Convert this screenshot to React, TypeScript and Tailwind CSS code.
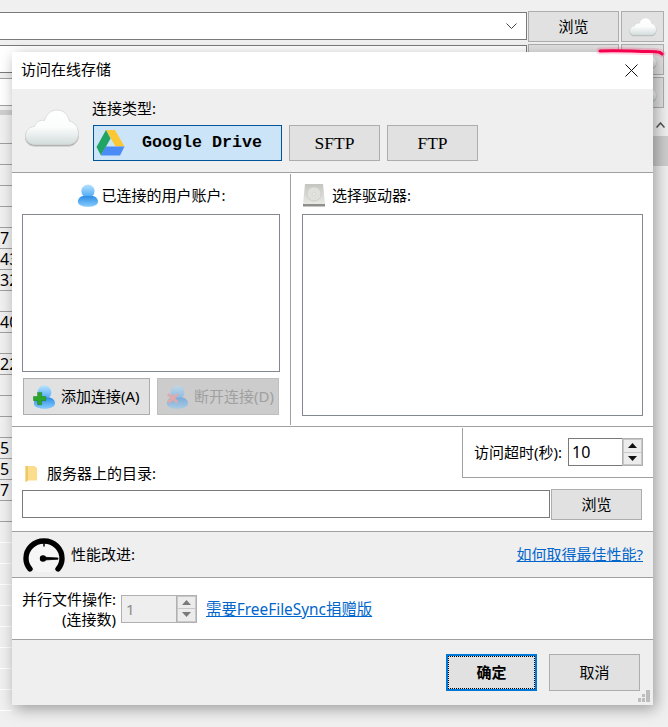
function CloudIcon({ className }: { className: string }) {
  const shape =
    "M11 36.5C5 36.5 1.5 32.5 1.5 27.5 1.5 22.5 5.5 18.5 10.5 18.5 12 13.5 16.5 11.5 20.5 12.5 22.5 6 27 2 33 2 39.5 2 44 6.5 45.5 13 51 14.5 54.5 19.5 54.5 25.5 54.5 32 50 36.5 44.5 36.5Z";
  return (
    <svg viewBox="0 0 56 40" className={className}>
      <defs>
        <linearGradient id="cloudFill" x1="0" y1="0" x2="0" y2="1">
          <stop offset="0" stopColor="#ffffff" />
          <stop offset="0.5" stopColor="#fbfcfc" />
          <stop offset="1" stopColor="#d3dcdc" />
        </linearGradient>
      </defs>
      <path d={shape} transform="translate(0 1.6)" fill="#a6aaa8" stroke="#bfc2c0" strokeWidth="1" />
      <path d={shape} fill="url(#cloudFill)" stroke="#d4d6d5" strokeWidth="0.8" />
    </svg>
  );
}

function DriveIcon() {
  return (
    <svg viewBox="0 0 29 28" className="w-[29px] h-[28px]">
      <path d="M10 1H19L28.5 17.5H19.5Z" fill="#fbc834" />
      <path d="M10 1L0.5 18L5 26.5L14.5 9.5Z" fill="#1fa463" />
      <path d="M9.5 17.5H28.5L24 26.5H5Z" fill="#4b8bf5" />
    </svg>
  );
}

function UserIcon({ className, badge }: { className: string; badge?: "add" | "remove" }) {
  return (
    <svg viewBox="0 0 24 26" className={className}>
      <defs>
        <linearGradient id="userHead" x1="0" y1="0" x2="0" y2="1">
          <stop offset="0" stopColor="#b4e2ff" />
          <stop offset="1" stopColor="#4aa6f4" />
        </linearGradient>
        <linearGradient id="userBody" x1="0" y1="0" x2="0" y2="1">
          <stop offset="0" stopColor="#2f8de6" />
          <stop offset="1" stopColor="#86ccfc" />
        </linearGradient>
      </defs>
      <circle cx="12.5" cy="8" r="7.5" fill="url(#userHead)" />
      <path d="M1 20C1 15.5 5 13.5 8 13.5H17C20 13.5 24 15.5 24 20 24 24 18 25.8 12.5 25.8 7 25.8 1 24 1 20Z" fill="url(#userBody)" />
      {badge === "add" && <path d="M5 8H9.5V12.5H14V17H9.5V21.5H5V17H0.5V12.5H5Z" fill="#2ba52b" stroke="#1f7d1f" strokeWidth="0.5" />}
      {badge === "remove" && <path d="M3 9L7.5 12 12 9 13.5 11.5 10 14.5 13.5 18 11.5 20 7.5 16.5 3.5 20 1 18 5 14.5 1 11.5Z" fill="#f08a8a" />}
    </svg>
  );
}

function DiskIcon() {
  return (
    <svg viewBox="0 0 24 24" className="w-[24px] h-[24px]">
      <defs>
        <linearGradient id="diskFill" x1="0" y1="0" x2="0" y2="1">
          <stop offset="0" stopColor="#c4c4c0" />
          <stop offset="1" stopColor="#e8e8e4" />
        </linearGradient>
      </defs>
      <path d="M3 1H21L23 21H1Z" fill="url(#diskFill)" />
      <circle cx="12" cy="11" r="7" fill="#e0e0dc" stroke="#d0d0cb" />
      <circle cx="12" cy="11" r="1.5" fill="#f6f6f4" stroke="#c4c4c0" strokeWidth="0.6" />
      <rect x="1" y="21" width="22" height="2.5" fill="#8f8f8c" />
    </svg>
  );
}

function FolderIcon() {
  return (
    <svg viewBox="0 0 13 18" className="w-[13px] h-[18px]">
      <path d="M0.5 1H9.5L12 3V15.5H3L0.5 17Z" fill="#fbdd8b" />
      <path d="M0.5 1H3V15.5L0.5 17Z" fill="#f0c868" />
    </svg>
  );
}

function GaugeIcon() {
  return (
    <svg viewBox="0 0 42 34" className="w-[42px] h-[34px]">
      <circle cx="21" cy="18" r="17" fill="#f6f6f6" />
      <path d="M7 31C4 27.5 3 24 3 20.5 3 10.5 11 3 21 3S39 10.5 39 20.5C39 24 38 27.5 35 31" fill="none" stroke="#000" strokeWidth="5.4" strokeLinecap="round" />
      <path d="M21 4V8.5" stroke="#000" strokeWidth="1.5" />
      <circle cx="20" cy="20.5" r="3.2" fill="#000" />
      <path d="M20 19.2L35 20V21.2L20 22Z" fill="#000" stroke="#000" strokeWidth="0.8" />
    </svg>
  );
}

function Spinner({ disabled }: { disabled?: boolean }) {
  const arrow = disabled ? "#7a7a7a" : "#111111";
  return (
    <div className="w-[21px] h-[28px] border border-[#b0b0b0] bg-[#c8c8c8] flex flex-col gap-px p-px">
      <div className="flex-1 flex items-center justify-center bg-[#ececec]">
        <svg viewBox="0 0 9 5" className="w-[9px] h-[5px]"><path d="M4.5 0L9 5H0Z" fill={arrow} /></svg>
      </div>
      <div className="flex-1 flex items-center justify-center bg-[#ececec]">
        <svg viewBox="0 0 9 5" className="w-[9px] h-[5px]"><path d="M0 0H9L4.5 5Z" fill={arrow} /></svg>
      </div>
    </div>
  );
}

function TypeButton({ label, width, active, mono }: { label: string; width: string; active?: boolean; mono?: boolean }) {
  return (
    <div
      className={`h-[36px] flex items-center justify-center border text-black ${width} ${
        active ? "bg-[#cce4f7] border-[#005499]" : "bg-[#e1e1e1] border-[#adadad]"
      } ${mono ? "text-[16.7px] font-['Liberation_Mono',monospace] font-bold" : "text-[17.5px] font-['Liberation_Serif',serif] font-medium"}`}
    >
      {label}
    </div>
  );
}

function BackgroundTable() {
  const rows = ["", "", "", "", "", "7", "43", "32", "", "40", "", "22", "", "", "", "5", "5", "7", "", "", "", "", "", "", "", "", "", ""];
  return (
    <div className="w-[12px] overflow-hidden mt-[4px]">
      <div className="h-[45px] flex flex-col">
        <div className="h-[28px] border-y border-[#a0a0a0]" />
        <div className="h-[5px] mt-[4px] bg-[#cfcfcf]" />
      </div>
      {rows.map((t, i) => (
        <div key={i} className={`h-[21px] w-[30px] border-b text-[16px] leading-[21px] text-black ${i > 18 ? "border-[#ffffff]" : "border-[#a0a0a0]"}`}>
          {t}
        </div>
      ))}
    </div>
  );
}

function BackgroundRow({ cloud, browse }: { cloud?: boolean; browse?: boolean }) {
  return (
    <div className="flex items-start h-[31px]">
      <div className="flex-1 h-[28px] mt-px bg-white border-y border-r border-[#7a7a7a] flex items-center justify-end pr-[9px]">
        {browse && (
          <svg viewBox="0 0 11 6" className="w-[11px] h-[6px]"><path d="M0.5 0.5L5.5 5.5 10.5 0.5" fill="none" stroke="#444" /></svg>
        )}
      </div>
      <div className="ml-px w-[91px] h-[31px] bg-[#e1e1e1] border border-[#adadad] flex items-center justify-center text-[15px] text-black">
        {browse && "浏览"}
      </div>
      <div className="ml-[2px] w-[43px] h-[31px] bg-[#e1e1e1] border border-[#adadad] flex items-center justify-center">
        {cloud && <CloudIcon className="w-[28px] h-[20px]" />}
      </div>
      <div className="w-[4px]" />
    </div>
  );
}

export default function App() {
  return (
    <div className="relative w-[668px] h-[727px] overflow-hidden bg-[#f0f0f0] font-['Noto_Sans','Noto_Sans_CJK_SC',sans-serif]">
      {/* Main window behind the dialog */}
      <div className="flex flex-col pt-[11px] gap-[2px] -ml-px">
        <BackgroundRow browse cloud />
        <BackgroundRow cloud />
        <BackgroundRow cloud />
      </div>
      <div className="absolute inset-x-0 top-[74px] bottom-0 flex justify-between">
        <BackgroundTable />
        <div className="w-[15px] mt-[36px] bg-[#f0f0f0] flex flex-col items-center">
          <svg viewBox="0 0 9 6" className="w-[9px] h-[6px] mt-[12px]"><path d="M0.5 5.5L4.5 1 8.5 5.5" fill="none" stroke="#505050" strokeWidth="1.5" /></svg>
          <div className="w-full h-[30px] mt-[8px] bg-[#cdcdcd]" />
        </div>
      </div>

      {/* Dialog */}
      <div className="absolute left-[12px] top-[52px] w-[641px] h-[653px] flex flex-col bg-[#efefef] text-[15px] text-black shadow-[3px_4px_14px_rgba(0,0,0,0.35)]">
        <div className="h-[37px] bg-white flex items-center justify-between pl-[9px] pr-[15px] pb-[2px]">
          <span>访问在线存储</span>
          <svg viewBox="0 0 13 13" className="w-[13px] h-[13px] mt-[2px]"><path d="M0.5 0.5L12.5 12.5M12.5 0.5L0.5 12.5" stroke="#111" /></svg>
        </div>

        <div className="h-[84px] border-b border-[#a0a0a0] flex">
          <div className="w-[81px] pl-[12px] pt-[19px]">
            <CloudIcon className="w-[56px] h-[40px]" />
          </div>
          <div className="flex flex-col pt-[9px]">
            <span className="leading-[21px] -ml-px">连接类型:</span>
            <div className="flex gap-[7px] mt-[6px]">
              <div className="relative">
                <TypeButton label="Google Drive" width="w-[189px] pl-[29px]" active mono />
                <div className="absolute left-[3px] top-[4px]"><DriveIcon /></div>
              </div>
              <TypeButton label="SFTP" width="w-[91px]" />
              <TypeButton label="FTP" width="w-[91px]" />
            </div>
          </div>
        </div>

        <div className="h-[254px] bg-white border-b border-[#a0a0a0] flex">
          <div className="w-[278px] pl-[10px] flex flex-col">
            <div className="h-[41px] flex items-center justify-center gap-[3px] pt-[3px] pr-[9px]">
              <UserIcon className="w-[21px] h-[23px]" />
              <span>已连接的用户账户:</span>
            </div>
            <div className="w-[258px] h-[158px] border border-[#828790] bg-white" />
            <div className="flex gap-[7px] mt-[6px] pl-px">
              <div className="w-[127px] h-[37px] bg-[#e1e1e1] border border-[#adadad] flex items-center pl-[9px] gap-[6px]">
                <UserIcon className="w-[22px] h-[24px]" badge="add" />
                <span>添加连接(A)</span>
              </div>
              <div className="w-[122px] h-[37px] bg-[#cccccc] border border-[#bfbfbf] flex items-center pl-[8px] gap-[6px] text-[#a0a0a0]">
                <UserIcon className="w-[22px] h-[24px] opacity-50" badge="remove" />
                <span>断开连接(D)</span>
              </div>
            </div>
          </div>
          <div className="w-px my-px bg-[#a0a0a0]" />
          <div className="flex-1 pl-[11px] pr-[10px] flex flex-col">
            <div className="h-[41px] flex items-center gap-[6px] pt-[3px]">
              <DiskIcon />
              <span>选择驱动器:</span>
            </div>
            <div className="h-[202px] border border-[#828790] bg-white" />
          </div>
        </div>

        <div className="h-[105px] bg-white border-b border-[#a0a0a0] flex flex-col">
          <div className="h-[62px] flex justify-between">
            <div className="flex items-end gap-[9px] pl-[13px] pb-[6px]">
              <FolderIcon />
              <span className="leading-[20px]">服务器上的目录:</span>
            </div>
            <div className="w-[191px] h-[50px] mt-px border-l border-b border-[#a0a0a0] flex items-start pl-[11px] pt-[10px]">
              <span className="w-[94px] leading-[28px] whitespace-nowrap">访问超时(秒):</span>
              <div className="w-[54px] h-[28px] border border-[#7a7a7a] border-r-0 pl-[3px] leading-[26px] text-[16px]">10</div>
              <Spinner />
            </div>
          </div>
          <div className="flex pl-[10px]">
            <div className="w-[528px] h-[28px] mt-px border border-[#7a7a7a] bg-white" />
            <div className="ml-px w-[91px] h-[31px] bg-[#e1e1e1] border border-[#adadad] flex items-center justify-center">浏览</div>
          </div>
        </div>

        <div className="h-[46px] border-b border-[#a0a0a0] flex items-center pl-[11px] pr-[10px]">
          <GaugeIcon />
          <span className="ml-[6px]">性能改进:</span>
          <a className="ml-auto text-[#0066cc] underline">如何取得最佳性能?</a>
        </div>

        <div className="h-[62px] bg-white border-b border-[#a0a0a0] flex items-center">
          <div className="w-[104px] text-right leading-[20px] mt-px">
            并行文件操作:
            <br />
            (连接数)
          </div>
          <div className="flex h-[28px] ml-[5px]">
            <div className="w-[55px] border border-[#b0b0b0] border-r-0 bg-[#eeeeee] pl-[4px] text-[#8a8a8a] leading-[26px]">1</div>
            <Spinner disabled />
          </div>
          <a className="ml-[9px] mt-[2px] text-[15.4px] text-[#0066cc] underline">需要FreeFileSync捐赠版</a>
        </div>

        <div className="relative flex-1 flex justify-end gap-[12px] pt-[14px] pr-[13px]">
          <div className="w-[91px] h-[37px] border-2 border-[#0078d7] bg-[#e1e1e1]">
            <div className="h-full border border-dotted border-black flex items-center justify-center font-bold">确定</div>
          </div>
          <div className="w-[91px] h-[37px] border border-[#adadad] bg-[#e1e1e1] flex items-center justify-center">取消</div>
          <svg viewBox="0 0 12 12" className="absolute right-[3px] bottom-[3px] w-[12px] h-[12px]">
            <path d="M8 0H12V4H8ZM4 4H7V7H4ZM8 4H12V8H8ZM0 8H3V12H0ZM4 8H7V12H4ZM8 8H12V12H8Z" fill="#bdbdbd" />
          </svg>
        </div>
      </div>

      {/* Red pen stroke over the screenshot */}
      <svg viewBox="0 0 72 16" className="absolute left-[596px] top-[44px] w-[72px] h-[16px]">
        <path d="M4 7C20 6 30 7 46 7.5 54 7.5 60 7 64 8.5L66 10" fill="none" stroke="#ff2d6e" strokeWidth="7" strokeLinecap="round" opacity="0.2" />
        <path d="M4 7C20 6 30 7 46 7.5 54 7.5 60 7 64 8.5L66 10" fill="none" stroke="#f5004f" strokeWidth="3" strokeLinecap="round" />
      </svg>
    </div>
  );
}
